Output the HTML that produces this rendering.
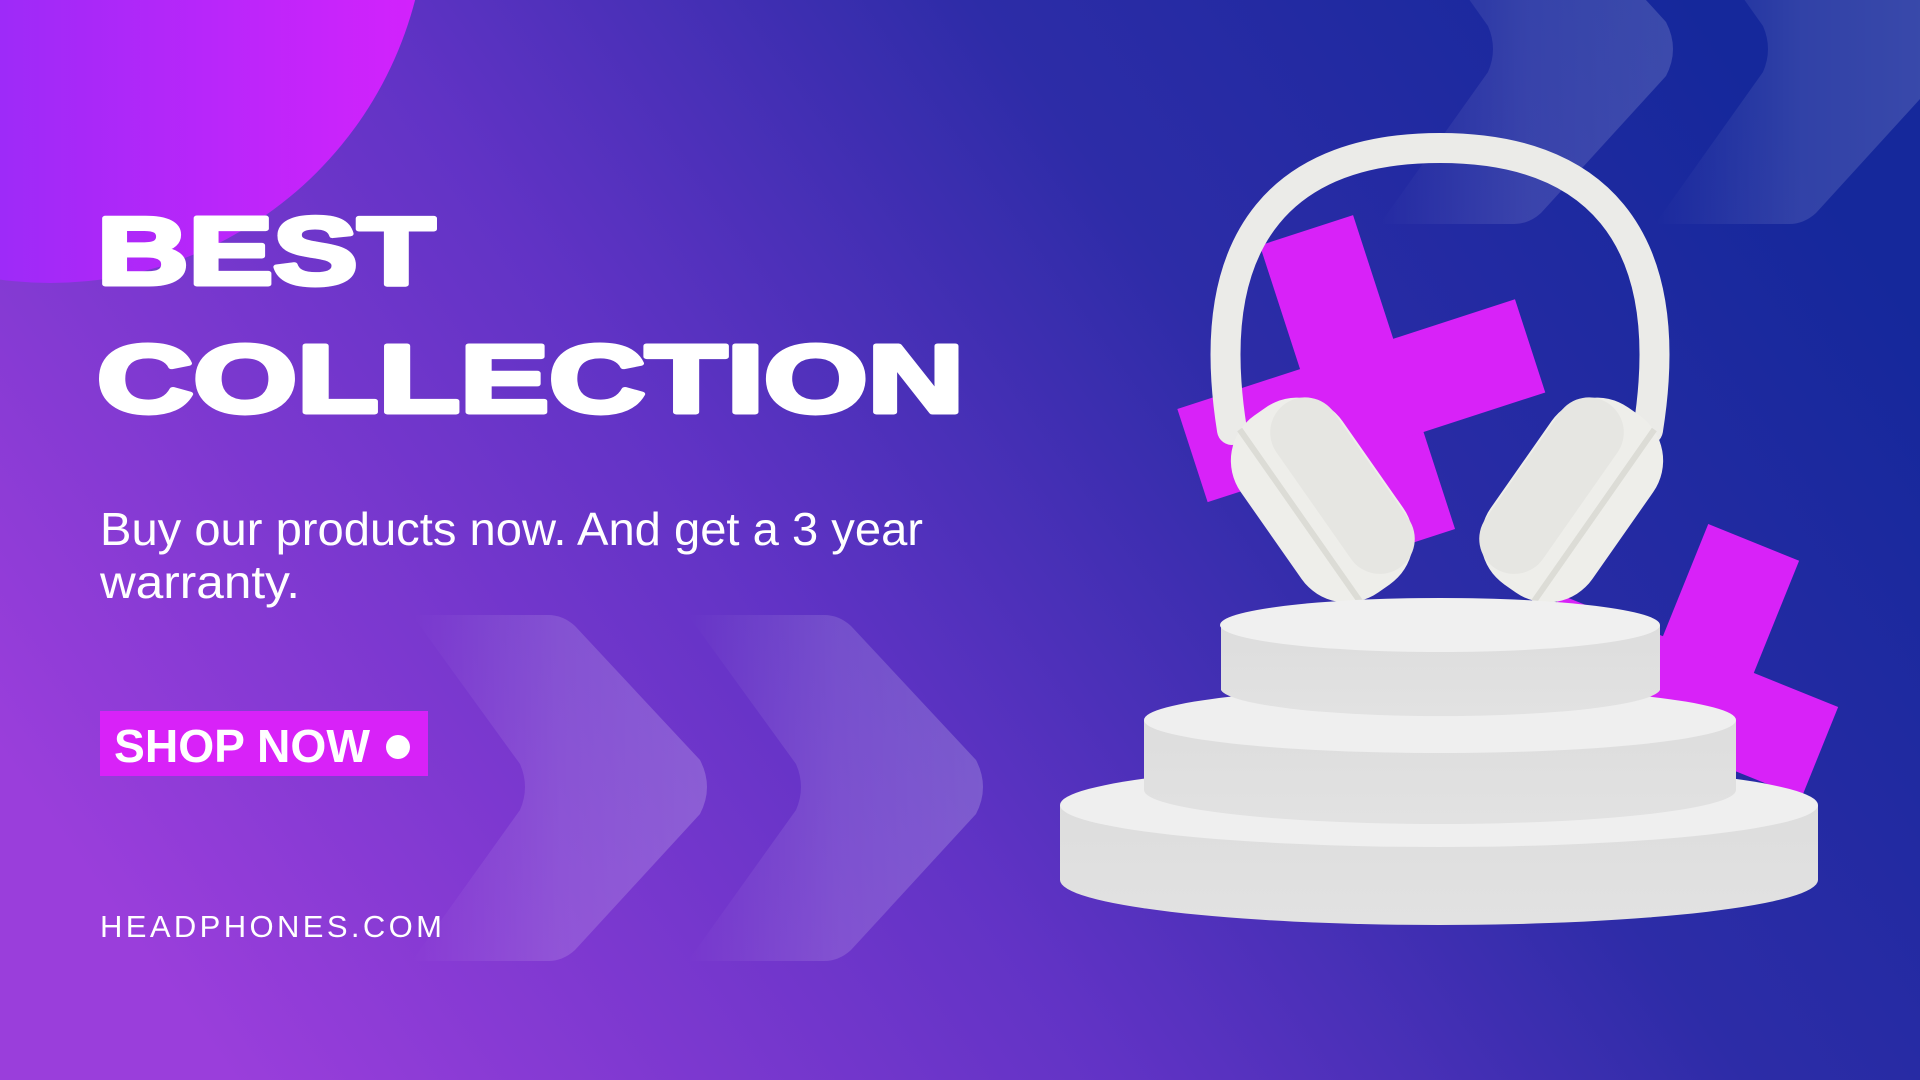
<!DOCTYPE html>
<html><head><meta charset="utf-8"><style>
html,body{margin:0;padding:0;width:1920px;height:1080px;overflow:hidden}
svg{display:block}
</style></head><body>
<svg width="1920" height="1080" viewBox="0 0 1920 1080" xmlns="http://www.w3.org/2000/svg">
<defs>
<linearGradient id="bg" x1="0" y1="0.7" x2="1" y2="0.3">
<stop offset="0" stop-color="#9a3edb"/>
<stop offset="0.4" stop-color="#6133c5"/>
<stop offset="0.68" stop-color="#2d2ca7"/>
<stop offset="1" stop-color="#15289b"/>
</linearGradient>
<linearGradient id="circ" x1="0" y1="0" x2="1" y2="0">
<stop offset="0" stop-color="#7430f4"/>
<stop offset="1" stop-color="#d422fc"/>
</linearGradient>
<linearGradient id="chev" x1="0" y1="0" x2="1" y2="0">
<stop offset="0" stop-color="#ffffff" stop-opacity="0"/>
<stop offset="0.5" stop-color="#ffffff" stop-opacity="0.14"/>
<stop offset="1" stop-color="#ffffff" stop-opacity="0.2"/>
</linearGradient>
<linearGradient id="chev2" x1="0" y1="0" x2="1" y2="0">
<stop offset="0" stop-color="#ffffff" stop-opacity="0"/>
<stop offset="0.5" stop-color="#ffffff" stop-opacity="0.12"/>
<stop offset="1" stop-color="#ffffff" stop-opacity="0.16"/>
</linearGradient>
<linearGradient id="side" x1="0" y1="0" x2="0" y2="1">
<stop offset="0" stop-color="#dddddd"/>
<stop offset="1" stop-color="#e2e2e2"/>
</linearGradient>
</defs>
<rect width="1920" height="1080" fill="url(#bg)"/>
<circle cx="50" cy="-94" r="377" fill="url(#circ)"/>

<g fill="url(#chev)">
<path d="M412,615 L548,615 Q563,615 575,626 L700,760 Q714,787 700,814 L575,950 Q563,961 548,961 L412,961 L520,810 Q530,787 520,764 Z"/>
<path d="M688,615 L824,615 Q839,615 851,626 L976,760 Q990,787 976,814 L851,950 Q839,961 824,961 L688,961 L796,810 Q806,787 796,764 Z"/>
</g>
<g fill="url(#chev2)">
<path d="M1380,-126 L1514,-126 Q1529,-126 1541,-115 L1666,22 Q1680,49 1666,76 L1541,213 Q1529,224 1514,224 L1380,224 L1488,72 Q1498,49 1488,26 Z"/>
<path d="M1655,-126 L1789,-126 Q1804,-126 1816,-115 L1941,22 Q1955,49 1941,76 L1816,213 Q1804,224 1789,224 L1655,224 L1763,72 Q1773,49 1763,26 Z"/>
</g>

<g fill="#d822f8">
<g transform="translate(1359,392) rotate(-18)">
<rect x="-49" y="-170" width="98" height="330"/>
<rect x="-178" y="-40" width="355" height="98"/>
</g>
<g transform="translate(1690,700) rotate(22)">
<rect x="-49" y="-170" width="98" height="330"/>
<rect x="-160" y="-49" width="300" height="98"/>
</g>
</g>

<path d="M1232,430 C1200,230 1290,148 1440,148 C1590,148 1680,230 1648,430" fill="none" stroke="#ebebe8" stroke-width="30" stroke-linecap="round"/>
<g transform="translate(1322,500) rotate(-35)">
<rect x="-62" y="-108" width="124" height="216" rx="55" fill="#eeeeea"/>
<rect x="-10" y="-100" width="70" height="200" rx="35" fill="#e6e6e2"/>
<rect x="-30" y="-105" width="6" height="210" fill="#dcdcd6"/>
</g>
<g transform="translate(1572,500) rotate(35)">
<rect x="-62" y="-108" width="124" height="216" rx="55" fill="#eeeeea"/>
<rect x="-60" y="-100" width="70" height="200" rx="35" fill="#e6e6e2"/>
<rect x="24" y="-105" width="6" height="210" fill="#dcdcd6"/>
</g>

<g>
<path d="M1060,805 L1060,880 A379,45 0 0 0 1818,880 L1818,805 Z" fill="url(#side)"/>
<ellipse cx="1439" cy="805" rx="379" ry="42" fill="#efefef"/>
<path d="M1144,720 L1144,790 A296,34 0 0 0 1736,790 L1736,720 Z" fill="url(#side)"/>
<ellipse cx="1440" cy="720" rx="296" ry="33" fill="#efefef"/>
<path d="M1221,625 L1221,690 A220,28 0 0 0 1660,690 L1660,625 Z" fill="url(#side)"/>
<ellipse cx="1440" cy="625" rx="220" ry="27" fill="#f0f0f0"/>
</g>

<g font-family="'Liberation Sans', sans-serif" fill="#ffffff">
<text x="97" y="284" font-size="96" font-weight="900" stroke="#ffffff" stroke-width="5" stroke-linejoin="round" textLength="338" lengthAdjust="spacingAndGlyphs">BEST</text>
<text x="97" y="412" font-size="96" font-weight="900" stroke="#ffffff" stroke-width="5" stroke-linejoin="round" textLength="867" lengthAdjust="spacingAndGlyphs">COLLECTION</text>
<text x="100" y="545" font-size="46" textLength="823" lengthAdjust="spacingAndGlyphs">Buy our products now. And get a 3 year</text>
<text x="100" y="598" font-size="46" textLength="200" lengthAdjust="spacingAndGlyphs">warranty.</text>
<rect x="100" y="711" width="328" height="65" fill="#d822f8"/>
<text x="114" y="762" font-size="46" font-weight="700" textLength="256" lengthAdjust="spacingAndGlyphs">SHOP NOW</text>
<circle cx="398" cy="747" r="12"/>
<text x="100" y="937" font-size="31" textLength="342" lengthAdjust="spacing">HEADPHONES.COM</text>
</g>
</svg>
</body></html>
